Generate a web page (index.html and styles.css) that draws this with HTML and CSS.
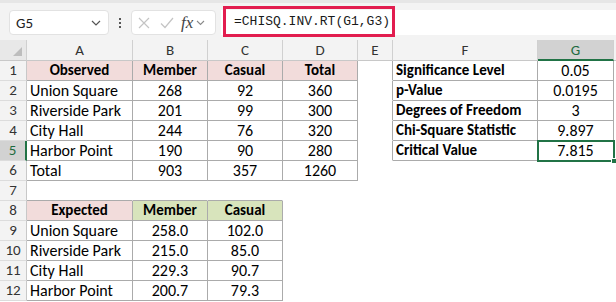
FILE: index.html
```html
<!DOCTYPE html>
<html>
<head>
<meta charset="utf-8">
<link rel="stylesheet" href="styles.css">
</head>
<body>
<div class="app">
  <div class="toolbar">
    <div class="namebox">
      <span class="name">G5</span>
      <svg class="chev" width="10" height="6" viewBox="0 0 10 6"><path d="M1 1 L5 5 L9 1" fill="none" stroke="#555" stroke-width="1.2"/></svg>
    </div>
    <div class="dots"><i></i><i></i><i></i></div>
    <div class="fnbox">
      <svg class="ico" width="12" height="12" viewBox="0 0 12 12"><path d="M1 1 L11 11 M11 1 L1 11" stroke="#c4c4c4" stroke-width="1.2" fill="none"/></svg>
      <svg class="ico chk" width="14" height="12" viewBox="0 0 14 12"><path d="M1 6.5 L5 10.5 L13 1" stroke="#c4c4c4" stroke-width="1.2" fill="none"/></svg>
      <span class="fx">fx</span>
      <svg class="chev2" width="9" height="6" viewBox="0 0 9 6"><path d="M1 1 L4.5 4.5 L8 1" fill="none" stroke="#8a8a8a" stroke-width="1.1"/></svg>
    </div>
    <div class="formula">
      <div class="hl">=CHISQ.INV.RT(G1,G3)</div>
    </div>
  </div>

  <div class="sheet">
    <!-- header row -->
    <div class="corner"><span class="tri"></span></div>
    <div class="ch">A</div><div class="ch">B</div><div class="ch">C</div><div class="ch">D</div><div class="ch">E</div><div class="ch">F</div><div class="ch sel">G</div><div class="ch last"></div>

    <!-- row 1 -->
    <div class="rh">1</div>
    <div class="c b pk ctr bold">Observed</div><div class="c b pk ctr bold">Member</div><div class="c b pk ctr bold">Casual</div><div class="c b pk ctr bold">Total</div>
    <div class="c r"></div><div class="c b bold">Significance Level</div><div class="c b ctr">0.05</div><div class="c"></div>
    <!-- row 2 -->
    <div class="rh">2</div>
    <div class="c b">Union Square</div><div class="c b ctr">268</div><div class="c b ctr">92</div><div class="c b ctr">360</div>
    <div class="c r"></div><div class="c b bold">p-Value</div><div class="c b ctr">0.0195</div><div class="c"></div>
    <!-- row 3 -->
    <div class="rh">3</div>
    <div class="c b">Riverside Park</div><div class="c b ctr">201</div><div class="c b ctr">99</div><div class="c b ctr">300</div>
    <div class="c r"></div><div class="c b bold">Degrees of Freedom</div><div class="c b ctr">3</div><div class="c"></div>
    <!-- row 4 -->
    <div class="rh">4</div>
    <div class="c b">City Hall</div><div class="c b ctr">244</div><div class="c b ctr">76</div><div class="c b ctr">320</div>
    <div class="c r"></div><div class="c b bold">Chi-Square Statistic</div><div class="c b ctr">9.897</div><div class="c"></div>
    <!-- row 5 -->
    <div class="rh selrow">5</div>
    <div class="c b">Harbor Point</div><div class="c b ctr">190</div><div class="c b ctr">90</div><div class="c b ctr">280</div>
    <div class="c r"></div><div class="c b bold">Critical Value</div><div class="c b ctr active">7.815<span class="handle"></span></div><div class="c"></div>
    <!-- row 6 -->
    <div class="rh">6</div>
    <div class="c b">Total</div><div class="c b ctr">903</div><div class="c b ctr">357</div><div class="c b ctr">1260</div>
    <div class="c"></div><div class="c"></div><div class="c"></div><div class="c"></div>
    <!-- row 7 -->
    <div class="rh">7</div>
    <div class="c bb"></div><div class="c bb"></div><div class="c bb"></div><div class="c"></div>
    <div class="c"></div><div class="c"></div><div class="c"></div><div class="c"></div>
    <!-- row 8 -->
    <div class="rh">8</div>
    <div class="c b pk ctr bold">Expected</div><div class="c b gr ctr bold">Member</div><div class="c b gr ctr bold">Casual</div><div class="c"></div>
    <div class="c"></div><div class="c"></div><div class="c"></div><div class="c"></div>
    <!-- row 9 -->
    <div class="rh">9</div>
    <div class="c b">Union Square</div><div class="c b ctr">258.0</div><div class="c b ctr">102.0</div><div class="c"></div>
    <div class="c"></div><div class="c"></div><div class="c"></div><div class="c"></div>
    <!-- row 10 -->
    <div class="rh">10</div>
    <div class="c b">Riverside Park</div><div class="c b ctr">215.0</div><div class="c b ctr">85.0</div><div class="c"></div>
    <div class="c"></div><div class="c"></div><div class="c"></div><div class="c"></div>
    <!-- row 11 -->
    <div class="rh">11</div>
    <div class="c b">City Hall</div><div class="c b ctr">229.3</div><div class="c b ctr">90.7</div><div class="c"></div>
    <div class="c"></div><div class="c"></div><div class="c"></div><div class="c"></div>
    <!-- row 12 -->
    <div class="rh">12</div>
    <div class="c b">Harbor Point</div><div class="c b ctr">200.7</div><div class="c b ctr">79.3</div><div class="c"></div>
    <div class="c"></div><div class="c"></div><div class="c"></div><div class="c"></div>
  </div>
</div>
</body>
</html>
```

FILE: styles.css
```css
* { box-sizing: border-box; }
html, body { margin: 0; padding: 0; background: #fff; }
body { width: 616px; height: 302px; overflow: hidden; font-family: Carlito, Calibri, Lato, "Liberation Sans", sans-serif; }

.app { width: 616px; }

.toolbar {
  height: 40px;
  background: #f3f3f3;
  border-top: 3px solid #e6e6e6;
  display: flex;
  align-items: center;
  padding-left: 9px;
  padding-top: 2px;
}

.namebox {
  width: 100px;
  height: 25px;
  background: #fff;
  border: 1px solid #e2e2e2;
  border-radius: 4px;
  display: flex;
  align-items: center;
  justify-content: space-between;
  padding: 0 7px 0 6px;
}
.name { font-size: 15px; color: #222; }

.dots {
  width: 22px;
  display: flex;
  flex-direction: column;
  align-items: center;
  gap: 2px;
}
.dots i { width: 2px; height: 2px; background: #555; display: block; }

.fnbox {
  width: 85px;
  height: 25px;
  background: #fff;
  border: 1px solid #e2e2e2;
  border-radius: 4px;
  display: flex;
  align-items: center;
  padding-left: 6px;
}
.ico { margin-right: 10px; }
.chk { margin-right: 7px; }
.fx {
  font-family: "Liberation Serif", serif;
  font-style: italic;
  font-size: 17px;
  color: #444;
  margin-right: 3px;
}

.formula {
  flex: 1;
  height: 25px;
  margin-left: 5px;
  background: #fff;
  display: flex;
  align-items: center;
}
.hl {
  height: 31px;
  width: 172px;
  margin-left: 2px;
  margin-top: -3px;
  border: 3px solid #e21d4f;
  display: flex;
  align-items: center;
  padding-left: 8px;
  font-family: "Liberation Mono", monospace;
  font-size: 13px;
  color: #1a1a1a;
}

.sheet {
  display: grid;
  grid-template-columns: 27px 106px 75px 75px 75px 35px 145px 76px 1fr;
  grid-template-rows: 21px repeat(12, 20px);
  font-size: 16px;
  color: #000;
}

.corner {
  background: #e8e8e8;
  border-right: 1px solid #d0d0d0;
  border-bottom: 1px solid #c8c8c8;
  position: relative;
}
.tri {
  position: absolute;
  right: 4px;
  bottom: 4px;
  width: 0; height: 0;
  border-left: 9px solid transparent;
  border-bottom: 9px solid #bdbdbd;
}

.ch {
  background: #f3f3f3;
  border-right: 1px solid #d0d0d0;
  border-bottom: 1px solid #c8c8c8;
  text-align: center;
  line-height: 20px;
  font-size: 15px;
  color: #333;
}
.ch.sel {
  background: #d2d2d2;
  color: #1e6b41;
  border-bottom: 2px solid #217346;
}
.ch.last { border-right: none; }

.rh {
  background: #f3f3f3;
  border-right: 1px solid #c8c8c8;
  border-bottom: 1px solid #dcdcdc;
  text-align: center;
  line-height: 19px;
  font-size: 15px;
  color: #333;
}
.rh.selrow {
  background: #d2d2d2;
  color: #1e6b41;
  border-right: 2px solid #217346;
}

.c {
  border-right: 1px solid transparent;
  border-bottom: 1px solid transparent;
  background-clip: padding-box;
  line-height: 19px;
  padding-left: 3px;
  white-space: nowrap;
  position: relative;
}
.c.b { border-right-color: #ababab; border-bottom-color: #ababab; }
.c.r { border-right-color: #ababab; }
.c.bb { border-bottom-color: #ababab; }
.ctr { text-align: center; padding-left: 0; }
.bold { font-weight: bold; font-size: 15px; }
.pk { background-color: #f2dcdb; }
.gr { background-color: #d8e4bc; }

.active { outline: 2px solid #217346; outline-offset: -1px; }
.handle {
  position: absolute;
  right: -4px;
  bottom: -4px;
  width: 6px;
  height: 6px;
  background: #217346;
  border: 1px solid #fff;
}
```
